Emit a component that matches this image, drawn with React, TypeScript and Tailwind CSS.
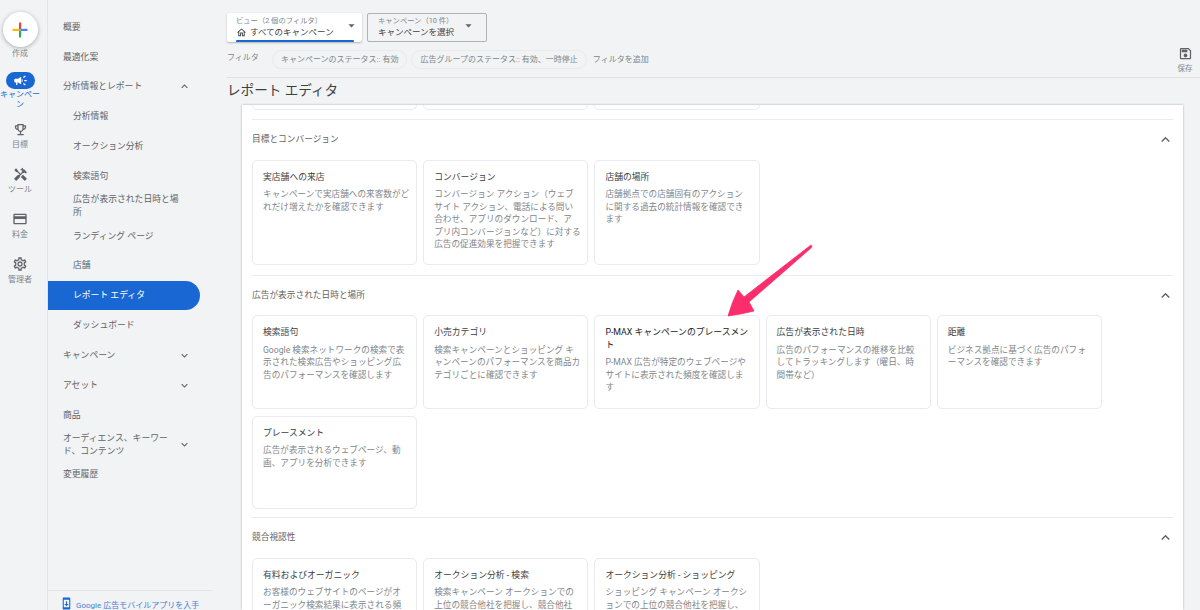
import React from "react";
import {
  MdCampaign, MdOutlineEmojiEvents, MdHandyman, MdCreditCard, MdOutlineSettings, MdOutlineSave,
  MdExpandLess, MdExpandMore, MdArrowDropDown, MdOutlineHome, MdOutlineSystemUpdate,
} from "react-icons/md";

const FONT = "font-['Roboto','Noto_Sans_CJK_JP',sans-serif]";

function RailItem({ icon, label }: { icon: React.ReactNode; label: string }) {
  return (
    <div className="flex flex-col items-center h-[45px] text-[#5f6368]">
      <div className="h-[18px] flex items-center justify-center">{icon}</div>
      <div className="mt-[2px] text-[8px] leading-[10px] text-[#80868b]">{label}</div>
    </div>
  );
}

type Nav = { t: string; child?: boolean; chev?: "up" | "down"; active?: boolean };
const NAV: Nav[] = [
  { t: "概要" },
  { t: "最適化案" },
  { t: "分析情報とレポート", chev: "up" },
  { t: "分析情報", child: true },
  { t: "オークション分析", child: true },
  { t: "検索語句", child: true },
  { t: "広告が表示された日時と場所", child: true },
  { t: "ランディング ページ", child: true },
  { t: "店舗", child: true },
  { t: "レポート エディタ", child: true, active: true },
  { t: "ダッシュボード", child: true },
  { t: "キャンペーン", chev: "down" },
  { t: "アセット", chev: "down" },
  { t: "商品" },
  { t: "オーディエンス、キーワード、コンテンツ", chev: "down" },
  { t: "変更履歴" },
];

function NavRow({ t, child, chev, active }: Nav) {
  return (
    <div
      className={
        "h-[29.85px] flex items-center w-[152px] rounded-r-full " +
        (child ? "pl-[25px] " : "pl-[15px] ") +
        (active ? "bg-[#1967d2] text-white" : "text-[#5f6368]")
      }
    >
      <div className={"text-[8.8px] leading-[12.5px] " + (child ? "w-[110px]" : "w-[107px] shrink-0")}>{t}</div>
      {chev === "up" && <MdExpandLess className="text-[13px] ml-[8px] shrink-0" />}
      {chev === "down" && <MdExpandMore className="text-[13px] ml-[8px] shrink-0" />}
    </div>
  );
}

function Card({ title, desc, h, strong }: { title: string; desc: string; h: string; strong?: boolean }) {
  return (
    <div className={"w-[165.2px] shrink-0 bg-white rounded-[5px] border border-[#e8eaed] pl-[10px] pr-[2px] pt-[10px] " + h}>
      <div className={"text-[8.8px] leading-[12.5px] whitespace-pre " + (strong ? "text-[#202124]" : "text-[#3c4043]")}>{title}</div>
      <div className="mt-[5px] text-[8.65px] leading-[12.5px] text-[#80868b] whitespace-pre">{desc}</div>
    </div>
  );
}

function SectionHead({ title }: { title: string }) {
  return (
    <div className="h-[39.5px] flex items-center justify-between text-[#5f6368]">
      <div className="text-[8.7px] text-[#5f6368]">{title}</div>
      <MdExpandLess className="text-[17px] -mr-[1px]" />
    </div>
  );
}

export default function App() {
  return (
    <div className={"w-[1200px] h-[610px] overflow-hidden relative flex bg-[#f1f3f4] " + FONT}>
      {/* Rail */}
      <div className="w-[48px] shrink-0 border-r border-[#e3e5e8] flex flex-col items-center pt-[12px] pr-[7px]">
        <div className="w-[35px] h-[35px] rounded-full bg-white shadow-[0_1px_4px_rgba(60,64,67,0.4)] flex items-center justify-center">
          <svg width="16" height="16" viewBox="0 0 16 16">
            <rect x="0.5" y="6.8" width="7" height="2.2" fill="#fbbc04" />
            <rect x="7" y="0.5" width="2.2" height="7" fill="#ea4335" />
            <rect x="8.5" y="6.8" width="7" height="2.2" fill="#4285f4" />
            <rect x="7" y="8.5" width="2.2" height="7" fill="#34a853" />
          </svg>
        </div>
        <div className="mt-[2px] text-[8px] leading-[10px] text-[#80868b]">作成</div>
        <div className="mt-[13px] w-[29px] h-[17px] rounded-full bg-[#1967d2] flex items-center justify-center">
          <MdCampaign className="text-white text-[15px]" />
        </div>
        <div className="mt-[1px] text-[8px] leading-[9.5px] text-[#1967d2] text-center w-[40px] mb-[11px]">キャンペーン</div>
        <RailItem icon={<MdOutlineEmojiEvents className="text-[15px]" />} label="目標" />
        <RailItem icon={<MdHandyman className="text-[15px]" />} label="ツール" />
        <RailItem icon={<MdCreditCard className="text-[16px]" />} label="料金" />
        <RailItem icon={<MdOutlineSettings className="text-[16px]" />} label="管理者" />
      </div>

      {/* Nav */}
      <div className="w-[170px] shrink-0 flex flex-col pt-[12px]">
        <div className="flex-1">
          {NAV.map((n) => (
            <NavRow key={n.t} {...n} />
          ))}
        </div>
        <div className="h-[20px] border-t border-[#e3e5e8] w-[164px] flex items-start pl-[12px] pt-[9px] text-[#4a7fd6]">
          <MdOutlineSystemUpdate className="text-[13px] -mt-[3px] shrink-0 text-[#1967d2]" />
          <div className="ml-[3px] text-[8px] leading-[11px] whitespace-nowrap">Google 広告モバイルアプリを入手</div>
        </div>
      </div>

      {/* Main */}
      <div className="flex-1 min-w-0 flex flex-col pl-[9px]">
        <div className="h-[78px] shrink-0 border-b border-[#dfe1e5] relative">
          <div className="flex gap-[5px] pt-[13px]">
            <div className="w-[135px] h-[29px] bg-white rounded-[2px] shadow-[0_1px_2px_rgba(60,64,67,0.35)] relative px-[9px] pt-[3px]">
              <div className="text-[7.3px] leading-[10px] text-[#80868b]">ビュー（2 個のフィルタ）</div>
              <div className="flex items-center text-[#3c4043]">
                <MdOutlineHome className="text-[11px] mr-[3px]" />
                <span className="text-[8.5px] leading-[12px]">すべてのキャンペーン</span>
              </div>
              <MdArrowDropDown className="absolute right-[3px] top-[5px] text-[15px] text-[#5f6368]" />
              <div className="absolute left-[9px] right-[8px] bottom-0 h-[2px] bg-[#1967d2] rounded-t-[1px]" />
            </div>
            <div className="w-[120px] h-[29px] bg-[#f1f3f4] rounded-[2px] border border-[#aeb2b7] relative px-[10px] pt-[2px]">
              <div className="text-[7.3px] leading-[10px] text-[#80868b]">キャンペーン（10 件）</div>
              <div className="text-[8.5px] leading-[12px] text-[#3c4043]">キャンペーンを選択</div>
              <MdArrowDropDown className="absolute right-[10px] top-[4px] text-[15px] text-[#5f6368]" />
            </div>
          </div>
          <div className="flex items-center mt-[8px] text-[8px] text-[#80868b]">
            <div className="w-[45px] -mt-[3px]">フィルタ</div>
            <div className="h-[19px] px-[8px] flex items-center rounded-full border border-[#e8eaed]">キャンペーンのステータス:: 有効</div>
            <div className="h-[19px] px-[8px] ml-[4px] flex items-center rounded-full border border-[#e8eaed]">広告グループのステータス:: 有効、一時停止</div>
            <div className="ml-[6px]">フィルタを追加</div>
          </div>
          <div className="absolute right-[5px] top-[46px] w-[20px] flex flex-col items-center text-[#5f6368]">
            <MdOutlineSave className="text-[15px]" />
            <div className="text-[7.5px] leading-[10px] mt-[3px] text-[#80868b]">保存</div>
          </div>
        </div>
        <div className="h-[27px] shrink-0 text-[13.6px] leading-[25px] text-[#3c4043]">レポート エディタ</div>
        <div className="ml-[15px] w-[941px] flex-1 min-h-0 overflow-hidden bg-white shadow-[0_0_2px_rgba(60,64,67,0.4)] px-[10px]">
          <div className="flex gap-[6px]">
            {[0, 1, 2].map((i) => (
              <div key={i} className="w-[165.2px] h-[5px] border border-t-0 border-[#e8eaed] rounded-b-[5px]" />
            ))}
          </div>
          <div className="mt-[9px] border-t border-[#e8eaed]">
            <SectionHead title="目標とコンバージョン" />
            <div className="flex gap-[6px] pb-[10px]">
              <Card h="h-[105px]" title="実店舗への来店" desc={"キャンペーンで実店舗への来客数がど\nれだけ増えたかを確認できます"} />
              <Card h="h-[105px]" title="コンバージョン" desc={"コンバージョン アクション（ウェブ\nサイト アクション、電話による問い\n合わせ、アプリのダウンロード、ア\nプリ内コンバージョンなど）に対する\n広告の促進効果を把握できます"} />
              <Card h="h-[105px]" title="店舗の場所" desc={"店舗拠点での店舗固有のアクション\nに関する過去の統計情報を確認でき\nます"} />
            </div>
          </div>
          <div className="border-t border-[#e8eaed]">
            <SectionHead title="広告が表示された日時と場所" />
            <div className="flex gap-[6px]">
              <Card h="h-[93.5px]" title="検索語句" desc={"Google 検索ネットワークの検索で表\n示された検索広告やショッピング広\n告のパフォーマンスを確認します"} />
              <Card h="h-[93.5px]" title="小売カテゴリ" desc={"検索キャンペーンとショッピング キ\nャンペーンのパフォーマンスを商品カ\nテゴリごとに確認できます"} />
              <Card h="h-[93.5px]" strong title={"P-MAX キャンペーンのプレースメン\nト"} desc={"P-MAX 広告が特定のウェブページや\nサイトに表示された頻度を確認しま\nす"} />
              <Card h="h-[93.5px]" title="広告が表示された日時" desc={"広告のパフォーマンスの推移を比較\nしてトラッキングします（曜日、時\n間帯など）"} />
              <Card h="h-[93.5px]" title="距離" desc={"ビジネス拠点に基づく広告のパフォ\nーマンスを確認できます"} />
            </div>
            <div className="mt-[7px] pb-[8px]">
              <Card h="h-[93.5px]" title="プレースメント" desc={"広告が表示されるウェブページ、動\n画、アプリを分析できます"} />
            </div>
          </div>
          <div className="border-t border-[#e8eaed]">
            <SectionHead title="競合視認性" />
            <div className="flex gap-[6px]">
              <Card h="h-[106px]" title="有料およびオーガニック" desc={"お客様のウェブサイトのページがオ\nーガニック検索結果に表示される頻\n度を確認できます"} />
              <Card h="h-[106px]" title="オークション分析 - 検索" desc={"検索キャンペーン オークションでの\n上位の競合他社を把握し、競合他社\nと比較できます"} />
              <Card h="h-[106px]" title="オークション分析 - ショッピング" desc={"ショッピング キャンペーン オークシ\nョンでの上位の競合他社を把握し、\n競合他社と比較できます"} />
            </div>
          </div>
        </div>
      </div>

      {/* Annotation arrow */}
      <svg className="absolute left-0 top-0 pointer-events-none" width="1200" height="610">
        <path d="M811 245 Q812.500 246.500 811 248 L749 302 L754 311 Q742 314 728 316 Q732 302 738 290 L744 297 Z" fill="#fb2d6c" stroke="#fb2d6c" strokeWidth="0.8" strokeLinejoin="round" />
      </svg>
    </div>
  );
}
